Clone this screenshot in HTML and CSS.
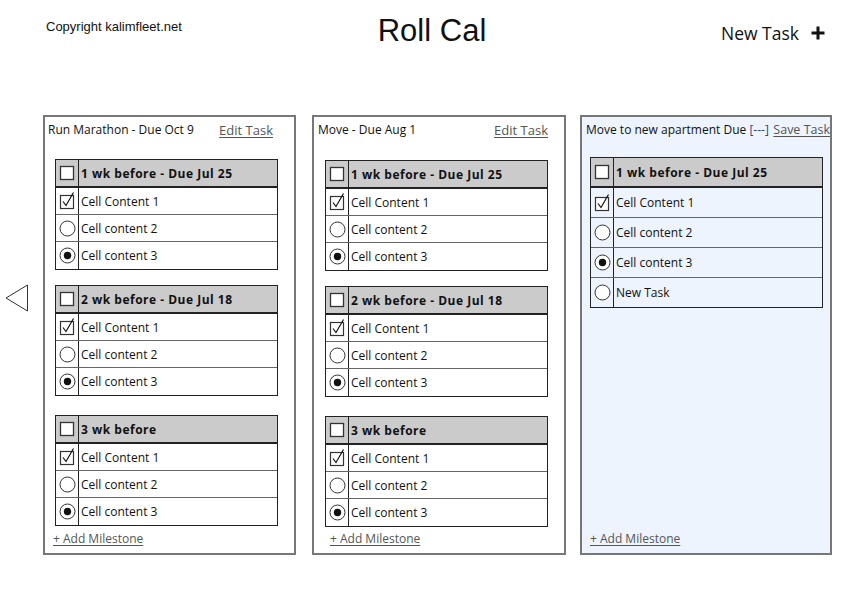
FILE: index.html
```html
<!DOCTYPE html>
<html>
<head>
<meta charset="utf-8">
<link rel="stylesheet" href="styles.css">
</head>
<body>
<header class="top">
  <div class="copy">Copyright kalimfleet.net</div>
  <h1 class="title">Roll Cal</h1>
  <div class="newtask">New Task
    <svg class="plus" width="16" height="16" viewBox="0 0 16 16"><path d="M8 1.5V14.5M1.5 8H14.5" stroke="#111" stroke-width="3"/></svg>
  </div>
</header>
<main class="main">
  <div class="nav">
    <svg width="24" height="28" viewBox="0 0 24 28"><path d="M22.5 1 L1 14 L22.5 27 Z" fill="none" stroke="#333" stroke-width="1"/></svg>
  </div>

  <section class="col">
    <div class="col-head"><span>Run Marathon - Due Oct 9</span><a class="link">Edit Task</a></div>
    <div class="tbl">
      <div class="hd"><span class="ic"><svg width="16" height="18" viewBox="0 0 16 18"><rect x="1.5" y="2.5" width="13" height="13" fill="#fff" stroke="#333" stroke-width="1.3"/></svg></span><span class="tx">1 wk before - Due Jul 25</span></div>
      <div class="rw"><span class="ic"><svg width="16" height="18" viewBox="0 0 16 18"><rect x="1.5" y="3.5" width="13" height="13" fill="#fff" stroke="#333" stroke-width="1.2"/><path d="M4 9.5 L7 13.5 L14.5 0.5" fill="none" stroke="#111" stroke-width="1.2"/></svg></span><span class="tx">Cell Content 1</span></div>
      <div class="rw"><span class="ic"><svg width="17" height="17" viewBox="0 0 17 17"><circle cx="8.5" cy="8.5" r="7.5" fill="#fff" stroke="#333"/></svg></span><span class="tx">Cell content 2</span></div>
      <div class="rw"><span class="ic"><svg width="17" height="17" viewBox="0 0 17 17"><circle cx="8.5" cy="8.5" r="7.5" fill="#fff" stroke="#333"/><circle cx="8.5" cy="8.5" r="3.7" fill="#111"/></svg></span><span class="tx">Cell content 3</span></div>
    </div>
    <div class="tbl">
      <div class="hd"><span class="ic"><svg width="16" height="18" viewBox="0 0 16 18"><rect x="1.5" y="2.5" width="13" height="13" fill="#fff" stroke="#333" stroke-width="1.3"/></svg></span><span class="tx">2 wk before - Due Jul 18</span></div>
      <div class="rw"><span class="ic"><svg width="16" height="18" viewBox="0 0 16 18"><rect x="1.5" y="3.5" width="13" height="13" fill="#fff" stroke="#333" stroke-width="1.2"/><path d="M4 9.5 L7 13.5 L14.5 0.5" fill="none" stroke="#111" stroke-width="1.2"/></svg></span><span class="tx">Cell Content 1</span></div>
      <div class="rw"><span class="ic"><svg width="17" height="17" viewBox="0 0 17 17"><circle cx="8.5" cy="8.5" r="7.5" fill="#fff" stroke="#333"/></svg></span><span class="tx">Cell content 2</span></div>
      <div class="rw"><span class="ic"><svg width="17" height="17" viewBox="0 0 17 17"><circle cx="8.5" cy="8.5" r="7.5" fill="#fff" stroke="#333"/><circle cx="8.5" cy="8.5" r="3.7" fill="#111"/></svg></span><span class="tx">Cell content 3</span></div>
    </div>
    <div class="tbl">
      <div class="hd"><span class="ic"><svg width="16" height="18" viewBox="0 0 16 18"><rect x="1.5" y="2.5" width="13" height="13" fill="#fff" stroke="#333" stroke-width="1.3"/></svg></span><span class="tx">3 wk before</span></div>
      <div class="rw"><span class="ic"><svg width="16" height="18" viewBox="0 0 16 18"><rect x="1.5" y="3.5" width="13" height="13" fill="#fff" stroke="#333" stroke-width="1.2"/><path d="M4 9.5 L7 13.5 L14.5 0.5" fill="none" stroke="#111" stroke-width="1.2"/></svg></span><span class="tx">Cell Content 1</span></div>
      <div class="rw"><span class="ic"><svg width="17" height="17" viewBox="0 0 17 17"><circle cx="8.5" cy="8.5" r="7.5" fill="#fff" stroke="#333"/></svg></span><span class="tx">Cell content 2</span></div>
      <div class="rw"><span class="ic"><svg width="17" height="17" viewBox="0 0 17 17"><circle cx="8.5" cy="8.5" r="7.5" fill="#fff" stroke="#333"/><circle cx="8.5" cy="8.5" r="3.7" fill="#111"/></svg></span><span class="tx">Cell content 3</span></div>
    </div>
    <a class="link add">+ Add Milestone</a>
  </section>

  <section class="col col2">
    <div class="col-head"><span>Move - Due Aug 1</span><a class="link">Edit Task</a></div>
    <div class="tbl">
      <div class="hd"><span class="ic"><svg width="16" height="18" viewBox="0 0 16 18"><rect x="1.5" y="2.5" width="13" height="13" fill="#fff" stroke="#333" stroke-width="1.3"/></svg></span><span class="tx">1 wk before - Due Jul 25</span></div>
      <div class="rw"><span class="ic"><svg width="16" height="18" viewBox="0 0 16 18"><rect x="1.5" y="3.5" width="13" height="13" fill="#fff" stroke="#333" stroke-width="1.2"/><path d="M4 9.5 L7 13.5 L14.5 0.5" fill="none" stroke="#111" stroke-width="1.2"/></svg></span><span class="tx">Cell Content 1</span></div>
      <div class="rw"><span class="ic"><svg width="17" height="17" viewBox="0 0 17 17"><circle cx="8.5" cy="8.5" r="7.5" fill="#fff" stroke="#333"/></svg></span><span class="tx">Cell content 2</span></div>
      <div class="rw"><span class="ic"><svg width="17" height="17" viewBox="0 0 17 17"><circle cx="8.5" cy="8.5" r="7.5" fill="#fff" stroke="#333"/><circle cx="8.5" cy="8.5" r="3.7" fill="#111"/></svg></span><span class="tx">Cell content 3</span></div>
    </div>
    <div class="tbl">
      <div class="hd"><span class="ic"><svg width="16" height="18" viewBox="0 0 16 18"><rect x="1.5" y="2.5" width="13" height="13" fill="#fff" stroke="#333" stroke-width="1.3"/></svg></span><span class="tx">2 wk before - Due Jul 18</span></div>
      <div class="rw"><span class="ic"><svg width="16" height="18" viewBox="0 0 16 18"><rect x="1.5" y="3.5" width="13" height="13" fill="#fff" stroke="#333" stroke-width="1.2"/><path d="M4 9.5 L7 13.5 L14.5 0.5" fill="none" stroke="#111" stroke-width="1.2"/></svg></span><span class="tx">Cell Content 1</span></div>
      <div class="rw"><span class="ic"><svg width="17" height="17" viewBox="0 0 17 17"><circle cx="8.5" cy="8.5" r="7.5" fill="#fff" stroke="#333"/></svg></span><span class="tx">Cell content 2</span></div>
      <div class="rw"><span class="ic"><svg width="17" height="17" viewBox="0 0 17 17"><circle cx="8.5" cy="8.5" r="7.5" fill="#fff" stroke="#333"/><circle cx="8.5" cy="8.5" r="3.7" fill="#111"/></svg></span><span class="tx">Cell content 3</span></div>
    </div>
    <div class="tbl">
      <div class="hd"><span class="ic"><svg width="16" height="18" viewBox="0 0 16 18"><rect x="1.5" y="2.5" width="13" height="13" fill="#fff" stroke="#333" stroke-width="1.3"/></svg></span><span class="tx">3 wk before</span></div>
      <div class="rw"><span class="ic"><svg width="16" height="18" viewBox="0 0 16 18"><rect x="1.5" y="3.5" width="13" height="13" fill="#fff" stroke="#333" stroke-width="1.2"/><path d="M4 9.5 L7 13.5 L14.5 0.5" fill="none" stroke="#111" stroke-width="1.2"/></svg></span><span class="tx">Cell Content 1</span></div>
      <div class="rw"><span class="ic"><svg width="17" height="17" viewBox="0 0 17 17"><circle cx="8.5" cy="8.5" r="7.5" fill="#fff" stroke="#333"/></svg></span><span class="tx">Cell content 2</span></div>
      <div class="rw"><span class="ic"><svg width="17" height="17" viewBox="0 0 17 17"><circle cx="8.5" cy="8.5" r="7.5" fill="#fff" stroke="#333"/><circle cx="8.5" cy="8.5" r="3.7" fill="#111"/></svg></span><span class="tx">Cell content 3</span></div>
    </div>
    <a class="link add">+ Add Milestone</a>
  </section>

  <section class="col col3">
    <div class="col-head"><span>Move to new apartment Due <span class="ph">[---]</span></span><a class="link">Save Task</a></div>
    <div class="tbl big">
      <div class="hd"><span class="ic"><svg width="16" height="18" viewBox="0 0 16 18"><rect x="1.5" y="2.5" width="13" height="13" fill="#fff" stroke="#333" stroke-width="1.3"/></svg></span><span class="tx">1 wk before - Due Jul 25</span></div>
      <div class="rw"><span class="ic"><svg width="16" height="18" viewBox="0 0 16 18"><rect x="1.5" y="3.5" width="13" height="13" fill="#fff" stroke="#333" stroke-width="1.2"/><path d="M4 9.5 L7 13.5 L14.5 0.5" fill="none" stroke="#111" stroke-width="1.2"/></svg></span><span class="tx">Cell Content 1</span></div>
      <div class="rw"><span class="ic"><svg width="17" height="17" viewBox="0 0 17 17"><circle cx="8.5" cy="8.5" r="7.5" fill="#fff" stroke="#333"/></svg></span><span class="tx">Cell content 2</span></div>
      <div class="rw"><span class="ic"><svg width="17" height="17" viewBox="0 0 17 17"><circle cx="8.5" cy="8.5" r="7.5" fill="#fff" stroke="#333"/><circle cx="8.5" cy="8.5" r="3.7" fill="#111"/></svg></span><span class="tx">Cell content 3</span></div>
      <div class="rw"><span class="ic"><svg width="17" height="17" viewBox="0 0 17 17"><circle cx="8.5" cy="8.5" r="7.5" fill="#fff" stroke="#333"/></svg></span><span class="tx">New Task</span></div>
    </div>
    <a class="link add">+ Add Milestone</a>
  </section>
</main>
</body>
</html>
```

FILE: styles.css
```css
* { box-sizing: border-box; }
html, body { margin: 0; padding: 0; }
body {
  width: 868px;
  height: 607px;
  background: #fff;
  color: #111;
  font-family: "Open Sans", "DejaVu Sans", sans-serif;
  font-size: 12px;
  overflow: hidden;
}

.top {
  display: grid;
  grid-template-columns: 1fr auto 1fr;
  height: 115px;
}
.copy {
  font-family: "Liberation Sans", Arial, sans-serif;
  font-size: 13px;
  padding: 19px 0 0 46px;
  line-height: 16px;
}
.title {
  margin: 0;
  padding: 13px 4px 0 0;
  font-family: "Liberation Sans", Arial, sans-serif;
  font-weight: normal;
  font-size: 31px;
  line-height: 36px;
}
.newtask {
  justify-self: end;
  display: flex;
  align-items: center;
  gap: 11px;
  padding: 22px 42px 0 0;
  font-size: 17.5px;
  line-height: 22px;
  height: 44px;
}
.plus { display: block; }

.main {
  display: flex;
  align-items: flex-start;
  gap: 15px;
}
.nav {
  width: 28px;
  padding: 169px 0 0 5px;
}
.nav svg { display: block; }

.col {
  width: 253px;
  height: 440px;
  border: 2px solid #777;
  display: flex;
  flex-direction: column;
  background: #fff;
}
.col2 { width: 254px; margin-left: 1px; }
.col3 { width: 252px; margin-left: -1px; background: #edf4fe; }

.col-head {
  display: flex;
  justify-content: space-between;
  align-items: center;
  padding: 4px 21px 0 3px;
  height: 22px;
  line-height: 16px;
  white-space: nowrap;
}
.col2 .col-head { padding-left: 4px; padding-right: 16px; }
.col3 .col-head { padding-right: 0; padding-left: 4px; }
.col3 .col-head .link { font-size: 12.5px; }
.ph { color: #33407a; }

.link {
  color: #555;
  text-decoration: underline;
  text-underline-offset: 2px;
  font-size: 13px;
}

.tbl {
  width: 223px;
  margin-left: 10px;
  margin-top: 20px;
  border: 1px solid #222;
  background: #fff;
  display: flex;
  flex-direction: column;
}
.tbl + .tbl { margin-top: 15px; }
.tbl + .tbl + .tbl { margin-top: 19px; }
.col2 .tbl { margin-left: 11px; }
.col2 .tbl:nth-child(2) { margin-top: 21px; }

.hd, .rw {
  display: grid;
  grid-template-columns: 23px 1fr;
  height: 27px;
  border-bottom: 1px solid #666;
}
.hd {
  background: #cbcbcb;
  height: 28px;
  border-bottom: 2px solid #222;
  font-weight: 700;
  letter-spacing: 0.5px;
}
.rw:last-child { border-bottom: 0; height: 27px; }
.ic {
  border-right: 1px solid #222;
  display: flex;
  align-items: center;
  justify-content: center;
}
.ic svg { display: block; }
.tx {
  display: flex;
  align-items: center;
  padding-left: 2px;
  white-space: nowrap;
}

.tbl.big {
  width: 233px;
  margin-left: 8px;
  margin-top: 18px;
  background: transparent;
}
.big .hd { height: 30px; }
.big .rw { height: 30px; }
.big .rw:last-child { height: 29px; }

.add {
  margin-top: auto;
  margin-left: 8px;
  margin-bottom: 6px;
  line-height: 16px;
  font-size: 12px;
  align-self: flex-start;
}
.col2 .add { margin-left: 16px; }
```
